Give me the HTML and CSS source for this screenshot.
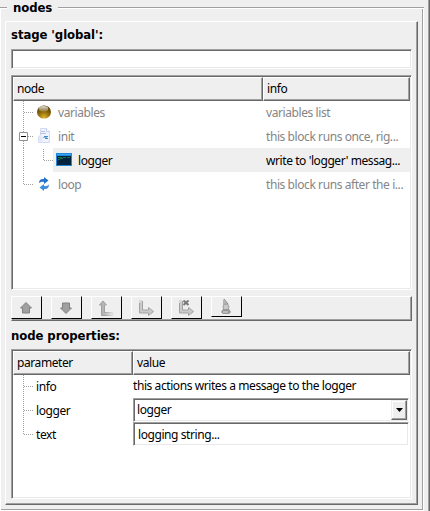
FILE: index.html
```html
<!DOCTYPE html>
<html lang="en">
<head>
<meta charset="utf-8">
<title>nodes</title>
<link rel="stylesheet" href="styles.css">
</head>
<body>
<div class="window">
  <div class="legend-row"><span class="rule rule-start"></span><span class="legend">nodes</span><span class="rule rule-end"></span></div>
  <div class="group">
    <main class="panel">
      <h2 class="title title-stage"><span>stage 'global':</span></h2>
      <input class="sunken stage-input" aria-label="stage">

      <section class="sunken tree nodes">
        <div class="row head"><div class="cell th"><span>node</span></div><div class="cell th"><span>info</span></div></div>
        <div class="row dim">
          <div class="cell node">
            <svg class="branch" width="40" height="24"><path class="dots" d="M10.500 1V24M11 12.500H20"/></svg>
            <svg class="ico" width="16" height="16" viewBox="0 0 16 16"><defs><radialGradient id="gold" cx=".5" cy=".9" r=".85"><stop offset="0" stop-color="#dcb42c"/><stop offset=".5" stop-color="#926a08"/><stop offset="1" stop-color="#4a3603"/></radialGradient><linearGradient id="shine" x2="0" y2="1"><stop offset="0" stop-color="#fff" stop-opacity=".85"/><stop offset="1" stop-color="#fff" stop-opacity=".15"/></linearGradient></defs><ellipse cx="8" cy="8" rx="7" ry="6.600" fill="url(#gold)"/><ellipse cx="7.500" cy="4.800" rx="4.800" ry="2.800" fill="url(#shine)"/></svg>
            <span>variables</span>
          </div>
          <div class="cell info"><span>variables list</span></div>
        </div>
        <div class="row dim">
          <div class="cell node">
            <svg class="branch" width="40" height="24"><path class="dots" d="M10.500 1V24M15 12.500H20"/><path d="M6.500 8.500h8v8h-8z" fill="#fff" stroke="#919191"/><path d="M8 12.500h5" stroke="#000"/></svg>
            <svg class="ico" width="16" height="16" viewBox="0 0 16 16"><path d="M4.500 .5h6l3 3v11h-11v-6l2-1z" fill="#f0f3fd" stroke="#d3dbf2"/><path d="M10.500 .5v3h3" fill="#fff" stroke="#c3cfee"/><path d="M5 3.500h4M4 5.500h6" stroke="#b5c3e4"/><path d="M2.500 8.500h4v5h-4z" fill="#e2e7f8"/><path d="M8 8.500h4M9 10.500h3" stroke="#4389c3"/><path d="M7 9.500h4" stroke="#83b5dc"/></svg>
            <span>init</span>
          </div>
          <div class="cell info"><span>this block runs once, rig...</span></div>
        </div>
        <div class="row selected">
          <div class="cell node child">
            <svg class="branch" width="40" height="24"><path class="dots" d="M10.500 0V24M30.500 1V13M31 12.500H40"/></svg>
            <svg class="ico" width="16" height="16" viewBox="0 0 16 16"><path d="M0 1h16v13H0z" fill="#2189d8"/><path d="M1 4h14v9H1z" fill="#03233c"/><path d="M2 5.500h4M7 5.500h3M11 5.500h3M2 7.500h2M4 6.500h3" stroke="#14734b"/><path d="M1 2.500h14" stroke="#38a6ec"/></svg>
            <span>logger</span>
          </div>
          <div class="cell info"><span>write to 'logger' messag...</span></div>
        </div>
        <div class="row dim">
          <div class="cell node">
            <svg class="branch" width="40" height="24"><path class="dots" d="M10.500 1V13M11 12.500H20"/></svg>
            <svg class="ico" width="16" height="16" viewBox="0 0 16 16"><path d="M3 7C3 4 5 2.500 8 3V1l4.500 3.500L8 8V6C6 5.600 5 6 3 7z" fill="#2373c8"/><path d="M13 8.500c0 3.500-2 5-5 4.500v2l-4.500-3.500L8 8v2c2 .4 3.500 0 5-1.500z" fill="#3f8edb"/></svg>
            <span>loop</span>
          </div>
          <div class="cell info"><span>this block runs after the i...</span></div>
        </div>
      </section>

      <div class="toolbar">
        <button class="tool" aria-label="up"><svg width="16" height="16" viewBox="0 0 16 16"><path d="M8 2.500l5.500 5.500h-2v5h-7V8h-2z" fill="#a0a0a0" stroke="#808080"/></svg></button>
        <button class="tool" aria-label="down"><svg width="16" height="16" viewBox="0 0 16 16"><path d="M8 13.500L2.500 8h2V3h7v5h2z" fill="#a0a0a0" stroke="#808080"/></svg></button>
        <button class="tool" aria-label="out"><svg width="16" height="16" viewBox="0 0 16 16"><defs><linearGradient id="fade"><stop offset=".3" stop-color="#b5b5b5"/><stop offset="1" stop-color="#e8e8e8"/></linearGradient><linearGradient id="edge"><stop offset=".4" stop-color="#a0a0a0"/><stop offset="1" stop-color="#e0e0e0"/></linearGradient></defs><path d="M5 .5L9 5H6.500v7.500H15v3H3.500V5H1z" fill="#ccc"/><path d="M3.500 15.500V5h-2L5 1l3.500 4h-2v7.500H15v3z" fill="url(#fade)" stroke="url(#edge)"/></svg></button>
        <button class="tool" aria-label="in"><svg width="16" height="16" viewBox="0 0 16 16"><path d="M1 0h3v10h6v3H1z" fill="#d8d8d8"/><path d="M1.500 3v10h9v2.500l5-4-5-4V10h-6V1" fill="#cacaca" stroke="#a2a2a2"/></svg></button>
        <button class="tool" aria-label="remove"><svg width="16" height="16" viewBox="0 0 16 16"><path d="M1 0h3v10h6v3H1z" fill="#d8d8d8"/><path d="M1.500 3v10h9v2.500l5-4-5-4V10h-6V1" fill="#cacaca" stroke="#a2a2a2"/><path d="M5.500 .5l5 4.500M10.500 .5l-5 4.500" stroke="#777" stroke-width="2"/></svg></button>
        <button class="tool short" aria-label="clean"><svg width="16" height="16" viewBox="0 0 16 16"><path d="M5 0l5 5-3 2-2-1z" fill="#b2b2b2"/><path d="M6 0l4 5" stroke="#888"/><circle cx="8" cy="8" r="3" fill="#c8c8c8" stroke="#a0a0a0"/><path d="M5 10h6l2 3-2 2H5l-2-2z" fill="#989898"/><path d="M5 13h5" stroke="#ddd"/></svg></button>
      </div>

      <h2 class="title title-props"><span>node properties:</span></h2>
      <section class="sunken tree props">
        <div class="row head"><div class="cell th"><span>parameter</span></div><div class="cell th"><span>value</span></div></div>
        <div class="row">
          <div class="cell node"><svg class="branch" width="20" height="24"><path class="dots" d="M10.500 1V24M11 12.500H20"/></svg><span>info</span></div>
          <div class="cell value"><span class="note">this actions writes a message to the logger</span></div>
        </div>
        <div class="row">
          <div class="cell node"><svg class="branch" width="20" height="24"><path class="dots" d="M10.500 1V24M11 12.500H20"/></svg><span>logger</span></div>
          <div class="cell value"><div class="sunken field"><span>logger</span><i class="drop"><svg width="7" height="4"><path d="M0 0h7L3.500 4z"/></svg></i></div></div>
        </div>
        <div class="row">
          <div class="cell node"><svg class="branch" width="20" height="24"><path class="dots" d="M10.500 1V13M11 12.500H20"/></svg><span>text</span></div>
          <div class="cell value"><div class="sunken field text"><span>logging string...</span></div></div>
        </div>
      </section>
    </main>
  </div>
</div>
</body>
</html>
```
FILE: styles.css
```css
* { box-sizing: border-box; }
body {
  margin: 0;
  background: #efefef;
  color: #000;
  font: 12px/24px "Noto Sans", "Open Sans", sans-serif;
  letter-spacing: -.42px;
  overflow: hidden;
}
.window {
  width: 430px;
  height: 511px;
  border-right: 1px solid #696969;
  box-shadow: inset -1px 0 #a0a0a0;
}
.legend-row { display: flex; height: 15px; width: 424px; }
.rule { height: 2px; margin-top: 7px; background: linear-gradient(#a0a0a0 50%, #fff 50%); }
.rule-start { width: 7px; }
.rule-end { flex: 1; }
.legend {
  width: 51px;
  padding-left: 6px;
  font: bold 13px/15px "DejaVu Sans Condensed", sans-serif;
  letter-spacing: -.1px;
}
.group {
  width: 424px;
  height: 502px;
  margin-top: -6px;
  padding: 12px 0 0 4px;
  border: solid #fff;
  border-width: 0 1px 1px;
  box-shadow: inset -1px -1px #a0a0a0;
}
.panel {
  width: 413px;
  height: 484px;
  padding: 0 5px;
  border: 1px solid;
  border-color: #fff #696969 #696969 #fff;
  box-shadow: inset -1px -1px #a0a0a0;
}
.title {
  margin: 0;
  font: bold 13px/16px "DejaVu Sans Condensed", sans-serif;
  letter-spacing: -.08px;
}
.title-stage { height: 27px; padding-top: 5px; }
.title-props { height: 28px; padding-top: 7px; }
.sunken {
  background: #fff;
  border: 1px solid;
  border-color: #a0a0a0 #fff #fff #a0a0a0;
  box-shadow: inset 1px 1px #696969, inset -1px -1px #e9e9e9;
}
.stage-input { display: block; width: 401px; height: 20px; outline: 0; }
.tree { width: 401px; padding: 1px; }
.nodes { height: 215px; margin-top: 6px; --first: 250px; }
.props { height: 150px; --first: 120px; }
.row { display: grid; grid-template-columns: var(--first) 1fr; height: 24px; }
.head { height: 23px; }
.cell { display: flex; align-items: center; white-space: nowrap; min-width: 0; }
.cell span { line-height: 22px; }
.th {
  padding-left: 3px;
  background: #efefef;
  border: 1px solid;
  border-color: #fff #696969 #696969 #fff;
  box-shadow: inset -1px -1px #a0a0a0;
}
.branch { flex: none; }
.node .branch { width: 20px; overflow: visible; }
.child .branch { width: 40px; }
.dots { fill: none; stroke: #a0a0a0; stroke-dasharray: 1 1; }
.nodes .ico { flex: none; margin: 0 6px 0 3px; }
.dim { color: #858585; }
.selected { background: linear-gradient(90deg, #fff 40px, #efefef 40px); }
.info { padding-left: 3px; }
.node > span, .info > span { padding-top: 2px; }
.props .node > span { margin-left: 3px; }
.toolbar {
  display: flex;
  gap: 9px;
  width: 401px;
  height: 25px;
  margin-top: 6px;
  border: 1px solid;
  border-color: #fff #696969 #696969 #efefef;
  box-shadow: inset -1px -1px #a0a0a0;
}
.tool {
  display: grid;
  place-items: center;
  width: 31px;
  height: 23px;
  margin: -1px 0 0 -1px;
  padding: 0 2px 0 0;
  background: #efefef;
  border: 1px solid;
  border-color: #fff #000 #000 #fff;
}
.tool + .tool { margin-left: 0; }
.short { height: 21px; }
.value { align-items: flex-start; }
.note { padding-top: 1px; }
.field { display: flex; align-items: center; width: 276px; height: 24px; padding: 1px 1px 1px 3px; }
.text { padding-left: 4px; }
.text span { padding-top: 2px; }
.drop {
  display: grid;
  place-items: center;
  width: 16px;
  height: 20px;
  margin-left: auto;
  background: #efefef;
  border: 1px solid;
  border-color: #efefef #696969 #696969 #efefef;
  box-shadow: inset -1px -1px #a0a0a0, inset 1px 1px #fff;
}
```
